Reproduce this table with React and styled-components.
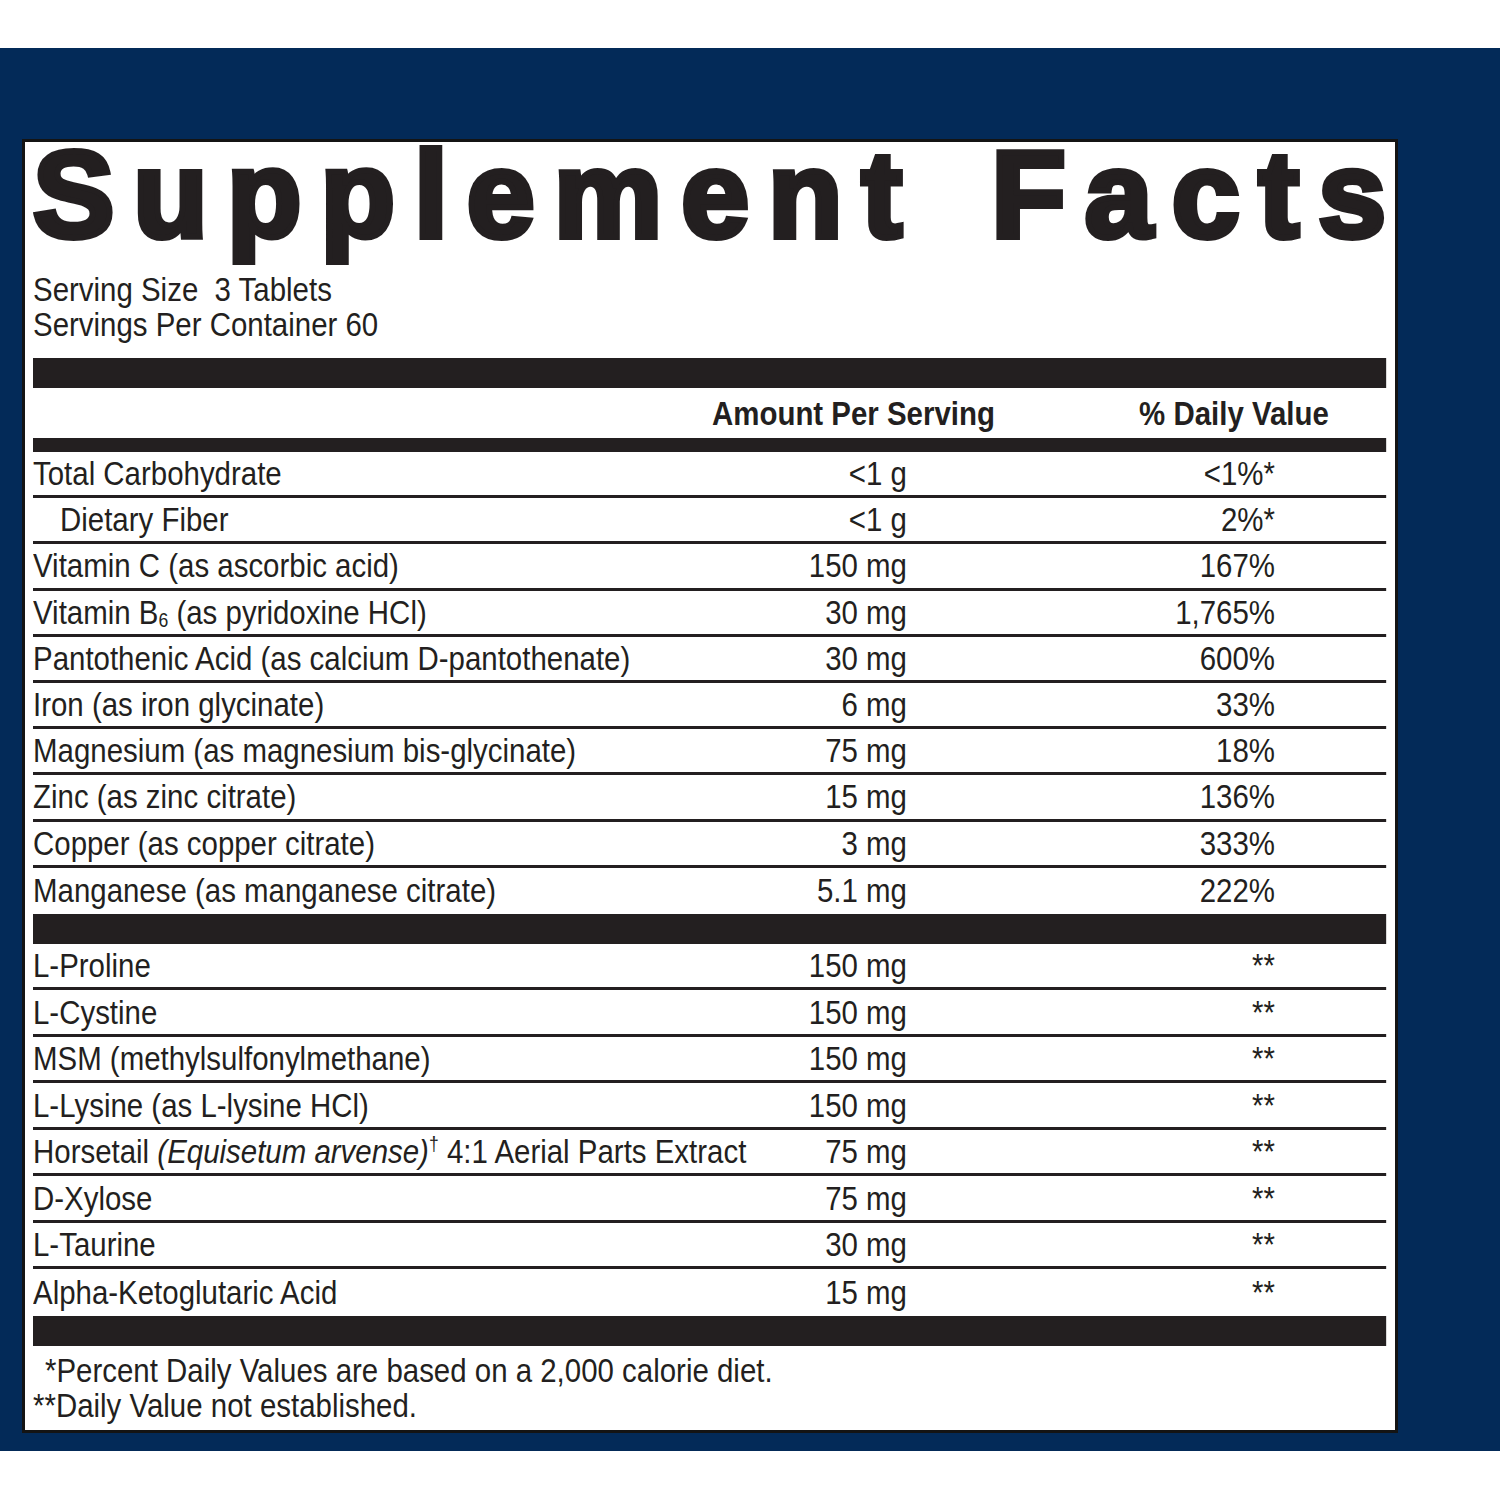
import React from 'react';
import styled, { createGlobalStyle } from 'styled-components';

const GlobalStyle = createGlobalStyle`
  html, body { margin: 0; padding: 0; background: #ffffff; }
  body { width: 1500px; height: 1500px; overflow: hidden; }
`;

const INK = '#231f20';
const SQUEEZE = 0.892;
/* convert an on-screen width into the un-narrowed layout space */
const u = px => `${(px / SQUEEZE).toFixed(2)}px`;

const Band = styled.div`
  margin-top: 48px;
  height: 1403px;
  box-sizing: border-box;
  background: #032a58;
  padding: 91px 102px 0 22px;
`;

const Panel = styled.section`
  box-sizing: border-box;
  width: 1376px;
  height: 1294px;
  background: #ffffff;
  border: 3px solid #141414;
  padding: 0 9px 0 8px;
  display: flex;
  flex-direction: column;
  color: ${INK};
  font-family: "Liberation Sans", Arial, Helvetica, sans-serif;
`;

const Title = styled.h1`
  margin: 0 -19px 0 0;
  display: flex;
  justify-content: space-between;
  font-weight: 700;
  font-size: 122px;
  line-height: 106px;
  letter-spacing: 19px;
  -webkit-text-stroke: 6px ${INK};
  color: ${INK};
`;

/* Helvetica Condensed look: the label body is set in Liberation Sans and
   narrowed horizontally as a whole; columns are sized in the un-narrowed space. */
const Condensed = styled.div`
  width: ${u(1353)};
  transform: scaleX(${SQUEEZE});
  transform-origin: left top;
  display: flex;
  flex-direction: column;
  font-size: 33px;
  line-height: 35px;
  white-space: nowrap;
`;

const Serving = styled.div`
  margin-top: 24px;
  display: flex;
  flex-direction: column;
`;

const Bar = styled.div`
  height: ${p => p.$h}px;
  margin-top: ${p => p.$mt || 0}px;
  background: ${INK};
  flex: none;
`;

const HeaderRow = styled.div`
  height: 50px;
  display: grid;
  grid-template-columns: ${u(650)} ${u(341)} ${u(90)} ${u(240)} 1fr;
  align-items: center;
  font-weight: 700;
  text-align: center;
`;

const Row = styled.div`
  height: ${p => p.$h}px;
  box-sizing: border-box;
  display: grid;
  grid-template-columns: ${u(724)} ${u(150)} ${u(368)} 1fr;
  align-items: center;
  border-bottom: ${p => (p.$last ? 'none' : `3px solid ${INK}`)};
`;

const Name = styled.div`
  padding-left: ${p => (p.$indent ? u(p.$indent) : 0)};
`;

const Amount = styled.div`
  text-align: right;
`;

const Daily = styled.div`
  text-align: right;
`;

const Sub = styled.sub`
  font-size: 0.6em;
  line-height: 0;
  vertical-align: -0.15em;
`;

const Sup = styled.sup`
  font-size: 0.6em;
  line-height: 0;
  vertical-align: 0.6em;
`;

const Latin = styled.i`
  font-style: italic;
`;

const Footnotes = styled.div`
  margin-top: 7px;
  display: flex;
  flex-direction: column;
`;

const Note = styled.div`
  padding-left: ${p => (p.$indent ? u(p.$indent) : 0)};
`;

const vitamins = [
  { name: 'Total Carbohydrate', amt: '<1 g', dv: '<1%*' },
  { name: 'Dietary Fiber', amt: '<1 g', dv: '2%*', indent: 27 },
  { name: 'Vitamin C (as ascorbic acid)', amt: '150 mg', dv: '167%' },
  {
    name: (
      <>
        Vitamin B<Sub>6</Sub> (as pyridoxine HCl)
      </>
    ),
    amt: '30 mg',
    dv: '1,765%',
  },
  { name: 'Pantothenic Acid (as calcium D-pantothenate)', amt: '30 mg', dv: '600%' },
  { name: 'Iron (as iron glycinate)', amt: '6 mg', dv: '33%' },
  { name: 'Magnesium (as magnesium bis-glycinate)', amt: '75 mg', dv: '18%' },
  { name: 'Zinc (as zinc citrate)', amt: '15 mg', dv: '136%' },
  { name: 'Copper (as copper citrate)', amt: '3 mg', dv: '333%' },
  { name: 'Manganese (as manganese citrate)', amt: '5.1 mg', dv: '222%' },
];

const others = [
  { name: 'L-Proline', amt: '150 mg' },
  { name: 'L-Cystine', amt: '150 mg' },
  { name: 'MSM (methylsulfonylmethane)', amt: '150 mg' },
  { name: 'L-Lysine (as L-lysine HCl)', amt: '150 mg' },
  {
    name: (
      <>
        Horsetail <Latin>(Equisetum arvense)</Latin>
        <Sup>†</Sup> 4:1 Aerial Parts Extract
      </>
    ),
    amt: '75 mg',
  },
  { name: 'D-Xylose', amt: '75 mg' },
  { name: 'L-Taurine', amt: '30 mg' },
  { name: 'Alpha-Ketoglutaric Acid', amt: '15 mg' },
];

export default function App() {
  return (
    <>
      <GlobalStyle />
      <Band>
        <Panel>
          <Title>
            <span>Supplement</span>
            <span>Facts</span>
          </Title>
          <Condensed>
            <Serving>
              <div>Serving Size&nbsp; 3 Tablets</div>
              <div>Servings Per Container 60</div>
            </Serving>
            <Bar $h={30} $mt={16} />
            <HeaderRow>
              <span />
              <span>Amount Per Serving</span>
              <span />
              <span>% Daily Value</span>
              <span />
            </HeaderRow>
            <Bar $h={14} />
            {vitamins.map((r, i) => (
              <Row key={i} $h={46.2} $last={i === vitamins.length - 1}>
                <Name $indent={r.indent}>{r.name}</Name>
                <Amount>{r.amt}</Amount>
                <Daily>{r.dv}</Daily>
                <span />
              </Row>
            ))}
            <Bar $h={30} />
            {others.map((r, i) => (
              <Row key={i} $h={46.5} $last={i === others.length - 1}>
                <Name>{r.name}</Name>
                <Amount>{r.amt}</Amount>
                <Daily>**</Daily>
                <span />
              </Row>
            ))}
            <Bar $h={30} />
            <Footnotes>
              <Note $indent={12}>*Percent Daily Values are based on a 2,000 calorie diet.</Note>
              <Note>**Daily Value not established.</Note>
            </Footnotes>
          </Condensed>
        </Panel>
      </Band>
    </>
  );
}
